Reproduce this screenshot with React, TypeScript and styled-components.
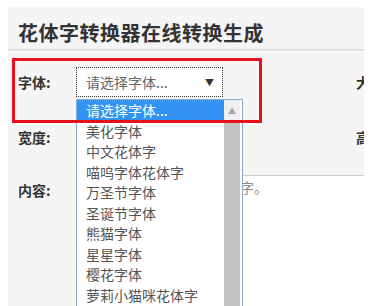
import { FC } from "react"
import styled, { createGlobalStyle } from "styled-components"

const GlobalStyle = createGlobalStyle`
  html, body {
    margin: 0;
    padding: 0;
    background: #ffffff;
    font-family: "Noto Sans CJK SC", "Noto Sans", sans-serif;
  }
`

const Page = styled.div`
  width: 371px;
  height: 306px;
  padding: 7px 7px 0 8px;
  box-sizing: border-box;
  overflow: hidden;
`

const Panel = styled.section`
  position: relative;
  width: 356px;
  height: 299px;
  background: #f5f5f5;
  overflow: hidden;
`

const Header = styled.header`
  height: 43px;
  box-sizing: border-box;
  padding: 12px 0 0 10px;
  border-bottom: 1px solid #d6d6d6;
  box-shadow: 0 1px 0 #ebebeb;
`

const Title = styled.h1`
  margin: 0;
  font-size: 20px;
  line-height: 28px;
  font-weight: 700;
  color: #333333;
  letter-spacing: 0.5px;
`

const Form = styled.div`
  display: flex;
  flex-direction: column;
  padding: 17px 0 0 10px;
`

const Row = styled.div<{ $gap?: number }>`
  display: flex;
  align-items: flex-start;
  margin-top: ${(p) => p.$gap ?? 0}px;
`

const Field = styled.div<{ $width?: number }>`
  display: flex;
  align-items: center;
  flex: ${(p) => (p.$width ? "none" : "1")};
  width: ${(p) => (p.$width ? `${p.$width}px` : "auto")};
`

const Label = styled.span<{ $top?: number }>`
  width: 58px;
  flex: none;
  font-size: 14px;
  font-weight: 700;
  color: #333333;
  line-height: 30px;
  white-space: nowrap;
  align-self: flex-start;
  padding-top: ${(p) => p.$top ?? 0}px;
`

const SelectBox = styled.div`
  width: 147px;
  height: 30px;
  box-sizing: border-box;
  border: 1px dotted #333333;
  background: #ffffff;
  display: flex;
  align-items: center;
  justify-content: space-between;
  padding: 0 8px 0 9px;
  font-size: 14px;
  color: #666666;
`

const Arrow = styled.span`
  font-size: 9px;
  color: #333333;
`

const TextInput = styled.div`
  width: 147px;
  height: 30px;
  box-sizing: border-box;
  border: 1px solid #cccccc;
  background: #ffffff;
`

const TextArea = styled.div`
  flex: 1;
  height: 140px;
  box-sizing: border-box;
  border: 1px solid #cfcfcf;
  border-right: none;
  background: #ffffff;
  padding: 1px 0 0 9px;
  font-size: 14px;
  line-height: 20px;
  color: #8a8a8a;
  white-space: nowrap;
  overflow: hidden;
`

const Dropdown = styled.div`
  position: absolute;
  left: 68px;
  top: 92px;
  width: 167px;
  height: 220px;
  box-sizing: border-box;
  border: 1px solid #8fa9d6;
  background: #ffffff;
  display: flex;
  z-index: 2;
`

const Options = styled.ul`
  list-style: none;
  margin: 0;
  padding: 0;
  flex: 1;
`

const Option = styled.li<{ $active?: boolean }>`
  height: 20.5px;
  line-height: 20.5px;
  padding-left: 9px;
  font-size: 14px;
  white-space: nowrap;
  color: ${(p) => (p.$active ? "#ffffff" : "#555555")};
  background: ${(p) => (p.$active ? "#3393f5" : "transparent")};
`

const ScrollBar = styled.div`
  width: 16px;
  margin-right: 2px;
  display: flex;
  flex-direction: column;
`

const ScrollButton = styled.div`
  height: 21px;
  background: #f0f0f0;
  display: flex;
  align-items: center;
  justify-content: center;
  font-size: 8px;
  color: #a3a3a3;
`

const ScrollThumb = styled.div`
  flex: 1;
  background: #c2c2c2;
`

const Highlight = styled.div`
  position: absolute;
  left: 4px;
  top: 51px;
  width: 250px;
  height: 65px;
  box-sizing: border-box;
  border: 3px solid #e5121c;
  z-index: 3;
  pointer-events: none;
`

const fonts = [
  "美化字体",
  "中文花体字",
  "喵呜字体花体字",
  "万圣节字体",
  "圣诞节字体",
  "熊猫字体",
  "星星字体",
  "樱花字体",
  "萝莉小猫咪花体字",
]

const App: FC = () => {
  return (
    <Page>
      <GlobalStyle />
      <Panel>
        <Header>
          <Title>花体字转换器在线转换生成</Title>
        </Header>

        <Form>
          <Row>
            <Field $width={338}>
              <Label>字体:</Label>
              <SelectBox>
                请选择字体...
                <Arrow>▼</Arrow>
              </SelectBox>
            </Field>
            <Field>
              <Label>大小:</Label>
            </Field>
          </Row>

          <Row $gap={25}>
            <Field $width={338}>
              <Label>宽度:</Label>
              <TextInput />
            </Field>
            <Field>
              <Label>高度:</Label>
            </Field>
          </Row>

          <Row $gap={23}>
            <Label $top={-3}>内容:</Label>
            <TextArea>请输入要转换成花体的文字。</TextArea>
          </Row>
        </Form>

        <Dropdown>
          <Options>
            <Option $active>请选择字体...</Option>
            {fonts.map((name) => (
              <Option key={name}>{name}</Option>
            ))}
          </Options>
          <ScrollBar>
            <ScrollButton>▲</ScrollButton>
            <ScrollThumb />
          </ScrollBar>
        </Dropdown>

        <Highlight />
      </Panel>
    </Page>
  )
}

export default App
